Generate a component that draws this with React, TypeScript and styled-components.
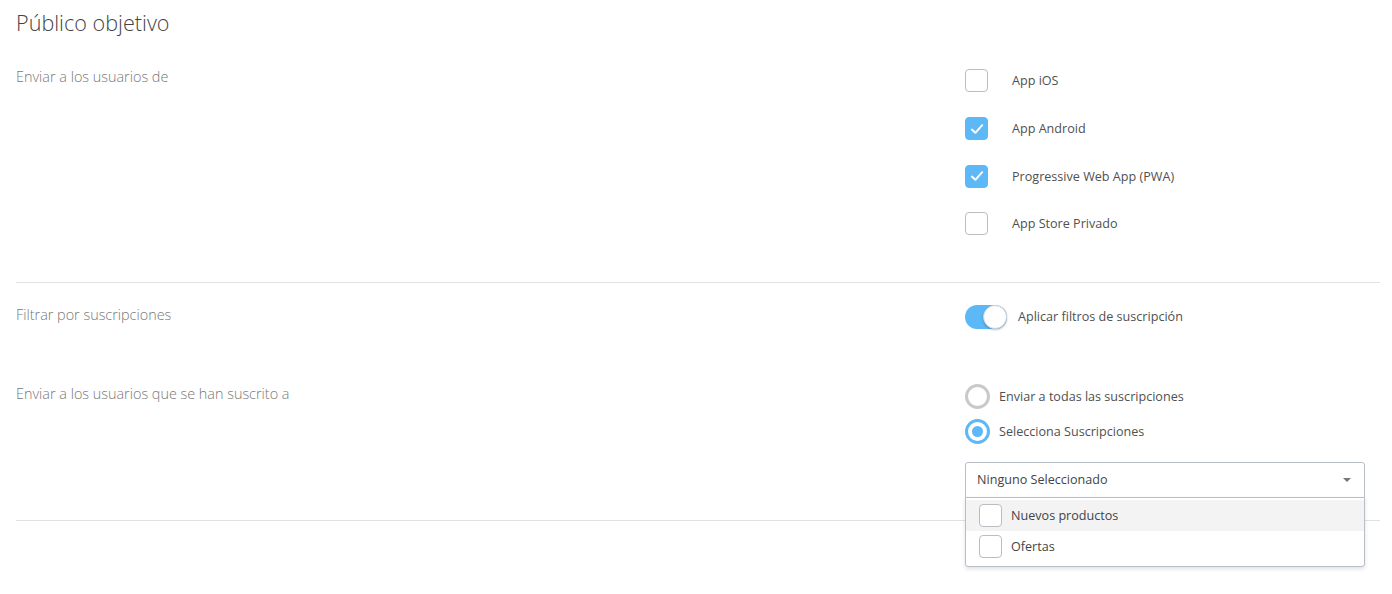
import React from 'react';
import styled, { createGlobalStyle } from 'styled-components';

const GlobalStyle = createGlobalStyle`
  html, body {
    margin: 0;
    padding: 0;
    background: #fff;
  }
  body {
    font-family: 'Open Sans', 'Liberation Sans', sans-serif;
  }
`;

const BLUE = '#5db8f7';

const Page = styled.div`
  min-height: 594px;
  padding: 0 12px 0 16px;
`;

const Title = styled.h2`
  margin: 0;
  padding-top: 8px;
  font-size: 21.6px;
  line-height: 30px;
  font-weight: 300;
  color: #444;
`;

const Section = styled.section<{ $top: number; $bottom: number }>`
  padding-top: ${(p) => p.$top}px;
  padding-bottom: ${(p) => p.$bottom}px;
  border-bottom: 1px solid #e1e1e1;
`;

const FieldRow = styled.div<{ $gap?: number }>`
  display: grid;
  grid-template-columns: 949px 1fr;
  margin-top: ${(p) => p.$gap ?? 0}px;
`;

const FieldLabel = styled.div<{ $offset: number }>`
  margin-top: ${(p) => p.$offset}px;
  font-size: 14.4px;
  font-weight: 300;
  line-height: 20px;
  color: #777;
`;

const Controls = styled.div`
  display: flex;
  flex-direction: column;
`;

const OptionRow = styled.label<{ $height: number; $gap: number }>`
  display: flex;
  align-items: center;
  gap: ${(p) => p.$gap}px;
  height: ${(p) => p.$height}px;
  font-size: 12.6px;
  color: #505050;
`;

const Box = styled.span<{ $checked?: boolean }>`
  box-sizing: border-box;
  width: 23px;
  height: 23px;
  flex: none;
  border-radius: 4px;
  border: 1px solid ${(p) => (p.$checked ? BLUE : '#b9bec4')};
  background: ${(p) => (p.$checked ? BLUE : '#fff')};
  display: flex;
  align-items: center;
  justify-content: center;
`;

const Toggle = styled.span`
  position: relative;
  box-sizing: border-box;
  width: 42px;
  height: 24px;
  flex: none;
  border-radius: 12px;
  background: ${BLUE};
`;

const Knob = styled.span`
  position: absolute;
  right: 0;
  top: 0;
  box-sizing: border-box;
  width: 24px;
  height: 24px;
  border-radius: 50%;
  background: #fff;
  border: 1px solid #cfd6dd;
  box-shadow: 0 1px 2px rgba(0, 0, 0, 0.25);
`;

const Radio = styled.span<{ $checked?: boolean }>`
  box-sizing: border-box;
  width: 25px;
  height: 25px;
  flex: none;
  border-radius: 50%;
  border: 3px solid ${(p) => (p.$checked ? BLUE : '#c9c9c9')};
  display: flex;
  align-items: center;
  justify-content: center;
  &::after {
    content: '';
    display: ${(p) => (p.$checked ? 'block' : 'none')};
    width: 11px;
    height: 11px;
    border-radius: 50%;
    background: ${BLUE};
  }
`;

const SelectWrap = styled.div`
  position: relative;
  width: 400px;
  margin-top: 13px;
`;

const SelectBox = styled.div`
  box-sizing: border-box;
  height: 36px;
  border: 1px solid #b7bec7;
  border-radius: 3px 3px 0 0;
  padding: 0 11px;
  display: flex;
  align-items: center;
  justify-content: space-between;
  font-size: 12.6px;
  color: #444;
  background: #fff;
`;

const Caret = styled.span`
  width: 0;
  height: 0;
  border-left: 4px solid transparent;
  border-right: 4px solid transparent;
  border-top: 4px solid #777;
  margin-right: 2px;
`;

const Menu = styled.div`
  position: absolute;
  left: 0;
  right: 0;
  top: 35px;
  box-sizing: border-box;
  background: #fff;
  border: 1px solid #b7bec7;
  border-radius: 0 0 3px 3px;
  padding: 2px 0 4px;
  box-shadow: 0 2px 4px rgba(0, 0, 0, 0.12);
  z-index: 2;
`;

const MenuItem = styled.div<{ $active?: boolean }>`
  display: flex;
  align-items: center;
  gap: 9px;
  height: 31px;
  padding-left: 13px;
  font-size: 12.6px;
  color: #444;
  background: ${(p) => (p.$active ? '#f3f3f3' : '#fff')};
`;

const Check = () => (
  <svg width="16" height="16" viewBox="0 0 16 16" fill="none">
    <path d="M2.8 8.6 L6.4 11.8 L13.2 4.2" stroke="#fff" strokeWidth="2" strokeLinecap="round" strokeLinejoin="round" />
  </svg>
);

const platforms = [
  { name: 'App iOS', checked: false },
  { name: 'App Android', checked: true },
  { name: 'Progressive Web App (PWA)', checked: true },
  { name: 'App Store Privado', checked: false },
];

const App: React.FC = () => {
  return (
    <Page>
      <GlobalStyle />
      <Title>Público objetivo</Title>

      <Section $top={19} $bottom={34}>
        <FieldRow>
          <FieldLabel $offset={10}>Enviar a los usuarios de</FieldLabel>
          <Controls>
            {platforms.map((p) => (
              <OptionRow key={p.name} $height={47.7} $gap={24}>
                <Box $checked={p.checked}>{p.checked && <Check />}</Box>
                {p.name}
              </OptionRow>
            ))}
          </Controls>
        </FieldRow>
      </Section>

      <Section $top={20} $bottom={22}>
        <FieldRow>
          <FieldLabel $offset={2}>Filtrar por suscripciones</FieldLabel>
          <Controls>
            <OptionRow $height={28} $gap={11}>
              <Toggle>
                <Knob />
              </Toggle>
              Aplicar filtros de suscripción
            </OptionRow>
          </Controls>
        </FieldRow>

        <FieldRow $gap={48}>
          <FieldLabel $offset={5}>Enviar a los usuarios que se han suscrito a</FieldLabel>
          <Controls>
            <OptionRow $height={35} $gap={9}>
              <Radio />
              Enviar a todas las suscripciones
            </OptionRow>
            <OptionRow $height={35} $gap={9}>
              <Radio $checked />
              Selecciona Suscripciones
            </OptionRow>
            <SelectWrap>
              <SelectBox>
                Ninguno Seleccionado
                <Caret />
              </SelectBox>
              <Menu>
                <MenuItem $active>
                  <Box />
                  Nuevos productos
                </MenuItem>
                <MenuItem>
                  <Box />
                  Ofertas
                </MenuItem>
              </Menu>
            </SelectWrap>
          </Controls>
        </FieldRow>
      </Section>
    </Page>
  );
};

export default App;
